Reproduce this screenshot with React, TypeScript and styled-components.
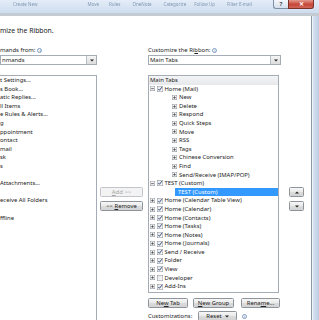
import React from 'react';
import styled, { createGlobalStyle } from 'styled-components';

const UI_FONT = `"Noto Sans", "Liberation Sans", sans-serif`;
const ROW = 8.6;

const GlobalStyle = createGlobalStyle`
  html, body { margin: 0; padding: 0; background: #fff; }
  body {
    width: 319px;
    height: 320px;
    overflow: hidden;
    font-family: ${UI_FONT};
    font-size: 5.9px;
    color: #222;
  }
  * { box-sizing: border-box; }
`;

const Screen = styled.div`
  width: 319px;
  height: 320px;
  display: flex;
  flex-direction: column;
  overflow: hidden;
`;

/* glass caption of the dialog, ribbon of outlook blurred behind it */
const TitleBar = styled.div`
  height: 13px;
  flex: none;
  display: flex;
  align-items: flex-start;
  background: linear-gradient(#e4edf8, #cddcee);
`;

const GhostRibbon = styled.div`
  flex: 1;
  display: flex;
  padding: 2px 0 0 13px;
  filter: blur(0.6px);
  opacity: 0.55;
`;

const GhostItem = styled.span<{ $ml: number }>`
  margin-left: ${p => p.$ml}px;
  font-size: 4.5px;
  line-height: 5px;
  color: #33507a;
  white-space: nowrap;
`;

const CaptionButtons = styled.div`
  display: flex;
  margin-right: 5px;
`;

const HelpButton = styled.div`
  width: 15px;
  height: 9px;
  border: 1px solid #7f8fa3;
  border-top: none;
  border-right: none;
  border-radius: 0 0 0 3px;
  background: linear-gradient(#f4f7fb, #d5dfeb);
  color: #3a4657;
  font-size: 6px;
  font-weight: bold;
  line-height: 8px;
  text-align: center;
`;

const CloseButton = styled.div`
  width: 26px;
  height: 9px;
  border: 1px solid #7d3128;
  border-top: none;
  border-radius: 0 0 3px 0;
  background: linear-gradient(#e49a8f, #c7463a 55%, #d0675a);
  color: #fff;
  font-size: 6px;
  font-weight: bold;
  line-height: 8px;
  text-align: center;
`;

const Body = styled.div`
  flex: 1;
  display: flex;
  border-top: 3px solid #c4cbd3;
  min-height: 0;
`;

const Client = styled.div`
  width: 312px;
  border-right: 1px solid #8d98a6;
  background: #fff;
  display: flex;
  flex-direction: column;
`;

const FrameEdge = styled.div`
  flex: 1;
  border-left: 1px solid #eef3f9;
  background: linear-gradient(90deg, #d6e2f0, #bccde3);
`;

const Heading = styled.div`
  margin: 11px 0 11px 0;
  height: 8px;
  line-height: 8px;
  font-size: 6.8px;
  color: #1a1a1a;
  white-space: nowrap;
`;

const Columns = styled.div`
  display: flex;
  align-items: flex-start;
`;

const Column = styled.div<{ $w: number; $ml?: number }>`
  width: ${p => p.$w}px;
  margin-left: ${p => p.$ml ?? 0}px;
  flex: none;
  display: flex;
  flex-direction: column;
`;

const Label = styled.div`
  height: 9px;
  line-height: 9px;
  display: flex;
  align-items: center;
  gap: 2px;
  white-space: nowrap;
`;

const InfoIcon = styled.span`
  width: 5px;
  height: 5px;
  border: 0.8px solid #7d9cc4;
  border-radius: 50%;
  color: #6d8fbd;
  font-size: 3.6px;
  line-height: 4px;
  text-align: center;
  font-weight: bold;
`;

const Dropdown = styled.div`
  height: 10px;
  border: 1px solid #a5acb5;
  display: flex;
  align-items: center;
  padding-left: 1px;
  background: #fff;
`;

const DropdownText = styled.span`
  flex: 1;
  white-space: nowrap;
  line-height: 8px;
`;

const DropArrow = styled.span`
  width: 10px;
  height: 8px;
  border-left: 1px solid #b7bec7;
  background: linear-gradient(#f6f6f6, #dcdcdc);
  display: flex;
  align-items: center;
  justify-content: center;
`;

const ListBox = styled.div<{ $h: number; $w?: number; $noLeft?: boolean }>`
  margin-top: 10px;
  height: ${p => p.$h}px;
  width: ${p => (p.$w ? `${p.$w}px` : 'auto')};
  border: 1px solid #a5acb5;
  border-left: ${p => (p.$noLeft ? 'none' : '1px solid #a5acb5')};
  background: #fff;
  overflow: hidden;
`;

const ListItem = styled.div`
  height: ${ROW}px;
  line-height: ${ROW}px;
  white-space: nowrap;
`;

const TreeHeader = styled.div`
  height: ${ROW}px;
  line-height: ${ROW}px;
  padding-left: 1px;
  background: linear-gradient(#f3f4f6, #e6e8eb);
  white-space: nowrap;
`;

const TreeRow = styled.div<{ $level: number }>`
  height: ${ROW}px;
  display: flex;
  align-items: center;
  padding-left: ${p => 1 + p.$level * 22}px;
  white-space: nowrap;
`;

const SelectedLabel = styled.div`
  height: ${ROW}px;
  line-height: ${ROW}px;
  margin-left: 26px;
  padding-left: 3px;
  background: #3399ff;
  color: #fff;
  white-space: nowrap;
`;

const TreeText = styled.span`
  line-height: ${ROW}px;
`;

const Button = styled.div<{ $w: number; $ml?: number; $disabled?: boolean }>`
  width: ${p => p.$w}px;
  height: 10px;
  margin-left: ${p => p.$ml ?? 0}px;
  border: 1px solid ${p => (p.$disabled ? '#c2c6cb' : '#8e949b')};
  border-radius: 1.5px;
  background: ${p =>
    p.$disabled ? '#f3f3f3' : 'linear-gradient(#f7f7f7, #e9e9e9 50%, #dcdcdc 51%, #d3d3d3)'};
  color: ${p => (p.$disabled ? '#a3a3a3' : '#222')};
  display: flex;
  align-items: center;
  justify-content: center;
  gap: 3px;
  white-space: nowrap;
  line-height: 8px;
  flex: none;
`;

const ButtonRow = styled.div<{ $mt: number }>`
  display: flex;
  align-items: center;
  margin-top: ${p => p.$mt}px;
`;

const Stack = styled.div<{ $mt: number }>`
  display: flex;
  flex-direction: column;
  gap: 4px;
  margin-top: ${p => p.$mt}px;
`;

const FooterLabel = styled.span`
  width: 50px;
  white-space: nowrap;
`;

const FooterInfo = styled.span`
  margin-left: 5px;
  display: flex;
`;

const Expander = ({ open }: { open?: boolean }) => (
  <svg width="5" height="5" viewBox="0 0 5 5" style={{ marginRight: 2, flex: 'none' }}>
    <defs>
      <linearGradient id="exg" x1="0" y1="0" x2="0" y2="1">
        <stop offset="0" stopColor="#ffffff" />
        <stop offset="1" stopColor="#dcdcdc" />
      </linearGradient>
    </defs>
    <rect x="0.25" y="0.25" width="4.5" height="4.5" fill="url(#exg)" stroke="#8f959c" strokeWidth="0.5" />
    <line x1="1.2" y1="2.5" x2="3.8" y2="2.5" stroke="#333" strokeWidth="0.6" />
    {!open && <line x1="2.5" y1="1.2" x2="2.5" y2="3.8" stroke="#333" strokeWidth="0.6" />}
  </svg>
);

const Check = ({ on = true }: { on?: boolean }) => (
  <svg width="6" height="6" viewBox="0 0 6 6" style={{ marginRight: 1.5, flex: 'none' }}>
    <defs>
      <linearGradient id="cbg" x1="0" y1="0" x2="1" y2="1">
        <stop offset="0" stopColor="#dfe3e8" />
        <stop offset="1" stopColor="#ffffff" />
      </linearGradient>
    </defs>
    <rect x="0.25" y="0.25" width="5.5" height="5.5" fill="url(#cbg)" stroke="#8b8f96" strokeWidth="0.5" />
    {on && <path d="M1.3 3 L2.5 4.3 L4.8 1.2" fill="none" stroke="#2b3f6e" strokeWidth="0.9" />}
  </svg>
);

const Arrow = ({ up }: { up?: boolean }) => (
  <svg width="4" height="3" viewBox="0 0 4 3">
    <path d={up ? 'M0 2.6 L2 0.4 L4 2.6 Z' : 'M0 0.4 L4 0.4 L2 2.6 Z'} fill="#222" />
  </svg>
);

const U = styled.span`
  text-decoration: underline;
`;

const leftItems = [
  't Settings...',
  's Book...',
  'atic Replies...',
  'll Items',
  'e Rules & Alerts...',
  'g',
  'ppointment',
  'ontact',
  'mail',
  'sk',
  's',
  '',
  'Attachments...',
  '',
  'eceive All Folders',
  '',
  'ffline',
];

type Node = { label: string; level: 0 | 1; exp?: 'open' | 'closed'; check?: boolean; selected?: boolean };

const tree: Node[] = [
  { label: 'Home (Mail)', level: 0, exp: 'open', check: true },
  { label: 'New', level: 1, exp: 'closed' },
  { label: 'Delete', level: 1, exp: 'closed' },
  { label: 'Respond', level: 1, exp: 'closed' },
  { label: 'Quick Steps', level: 1, exp: 'closed' },
  { label: 'Move', level: 1, exp: 'closed' },
  { label: 'RSS', level: 1, exp: 'closed' },
  { label: 'Tags', level: 1, exp: 'closed' },
  { label: 'Chinese Conversion', level: 1, exp: 'closed' },
  { label: 'Find', level: 1, exp: 'closed' },
  { label: 'Send/Receive (IMAP/POP)', level: 1, exp: 'closed' },
  { label: 'TEST (Custom)', level: 0, exp: 'open', check: true },
  { label: 'TEST (Custom)', level: 1, selected: true },
  { label: 'Home (Calendar Table View)', level: 0, exp: 'closed', check: true },
  { label: 'Home (Calendar)', level: 0, exp: 'closed', check: true },
  { label: 'Home (Contacts)', level: 0, exp: 'closed', check: true },
  { label: 'Home (Tasks)', level: 0, exp: 'closed', check: true },
  { label: 'Home (Notes)', level: 0, exp: 'closed', check: true },
  { label: 'Home (Journals)', level: 0, exp: 'closed', check: true },
  { label: 'Send / Receive', level: 0, exp: 'closed', check: true },
  { label: 'Folder', level: 0, exp: 'closed', check: true },
  { label: 'View', level: 0, exp: 'closed', check: true },
  { label: 'Developer', level: 0, exp: 'closed', check: false },
  { label: 'Add-Ins', level: 0, exp: 'closed', check: true },
];

const ghost = [
  { t: 'Create New', ml: 0 },
  { t: 'Move', ml: 50 },
  { t: 'Rules', ml: 10 },
  { t: 'OneNote', ml: 12 },
  { t: 'Categorize', ml: 12 },
  { t: 'Follow Up', ml: 8 },
  { t: 'Filter E-mail', ml: 12 },
];

export default function App() {
  return (
    <Screen>
      <GlobalStyle />
      <TitleBar>
        <GhostRibbon>
          {ghost.map(g => (
            <GhostItem key={g.t} $ml={g.ml}>
              {g.t}
            </GhostItem>
          ))}
        </GhostRibbon>
        <CaptionButtons>
          <HelpButton>?</HelpButton>
          <CloseButton>✕</CloseButton>
        </CaptionButtons>
      </TitleBar>
      <Body>
        <Client>
          <Heading>mize the Ribbon.</Heading>
          <Columns>
            <Column $w={97}>
              <Label>
                <span>mands from:</span>
                <InfoIcon>i</InfoIcon>
              </Label>
              <Dropdown>
                <DropdownText>nmands</DropdownText>
                <DropArrow>
                  <Arrow />
                </DropArrow>
              </Dropdown>
              <ListBox $h={260} $noLeft>
                {leftItems.map((t, i) => (
                  <ListItem key={i}>{t}</ListItem>
                ))}
              </ListBox>
            </Column>

            <Column $w={43} $ml={3}>
              <Stack $mt={141}>
                <Button $w={43} $disabled>
                  <span>
                    <U>A</U>dd &gt;&gt;
                  </span>
                </Button>
                <Button $w={43}>
                  <span>
                    &lt;&lt; <U>R</U>emove
                  </span>
                </Button>
              </Stack>
            </Column>

            <Column $w={133} $ml={5}>
              <Label>
                <span>
                  Customize the Ri<U>b</U>bon:
                </span>
                <InfoIcon>i</InfoIcon>
              </Label>
              <Dropdown>
                <DropdownText>Main Tabs</DropdownText>
                <DropArrow>
                  <Arrow />
                </DropArrow>
              </Dropdown>
              <ListBox $h={218} $w={131}>
                <TreeHeader>Main Tabs</TreeHeader>
                {tree.map((n, i) =>
                  n.selected ? (
                    <SelectedLabel key={i}>{n.label}</SelectedLabel>
                  ) : (
                    <TreeRow key={i} $level={n.level}>
                      {n.exp && <Expander open={n.exp === 'open'} />}
                      {n.check !== undefined && <Check on={n.check} />}
                      <TreeText>{n.label}</TreeText>
                    </TreeRow>
                  )
                )}
              </ListBox>
              <ButtonRow $mt={5}>
                <Button $w={40}>
                  <span>
                    Ne<U>w</U> Tab
                  </span>
                </Button>
                <Button $w={41} $ml={5}>
                  <span>
                    <U>N</U>ew Group
                  </span>
                </Button>
                <Button $w={39} $ml={7}>
                  <span>
                    Rena<U>m</U>e...
                  </span>
                </Button>
              </ButtonRow>
              <ButtonRow $mt={3}>
                <FooterLabel>Customizations:</FooterLabel>
                <Button $w={39}>
                  <span>Reset</span>
                  <Arrow />
                </Button>
                <FooterInfo>
                  <InfoIcon>i</InfoIcon>
                </FooterInfo>
              </ButtonRow>
            </Column>

            <Column $w={15} $ml={8}>
              <Stack $mt={141}>
                <Button $w={15}>
                  <Arrow up />
                </Button>
                <Button $w={15}>
                  <Arrow />
                </Button>
              </Stack>
            </Column>
          </Columns>
        </Client>
        <FrameEdge />
      </Body>
    </Screen>
  );
}
